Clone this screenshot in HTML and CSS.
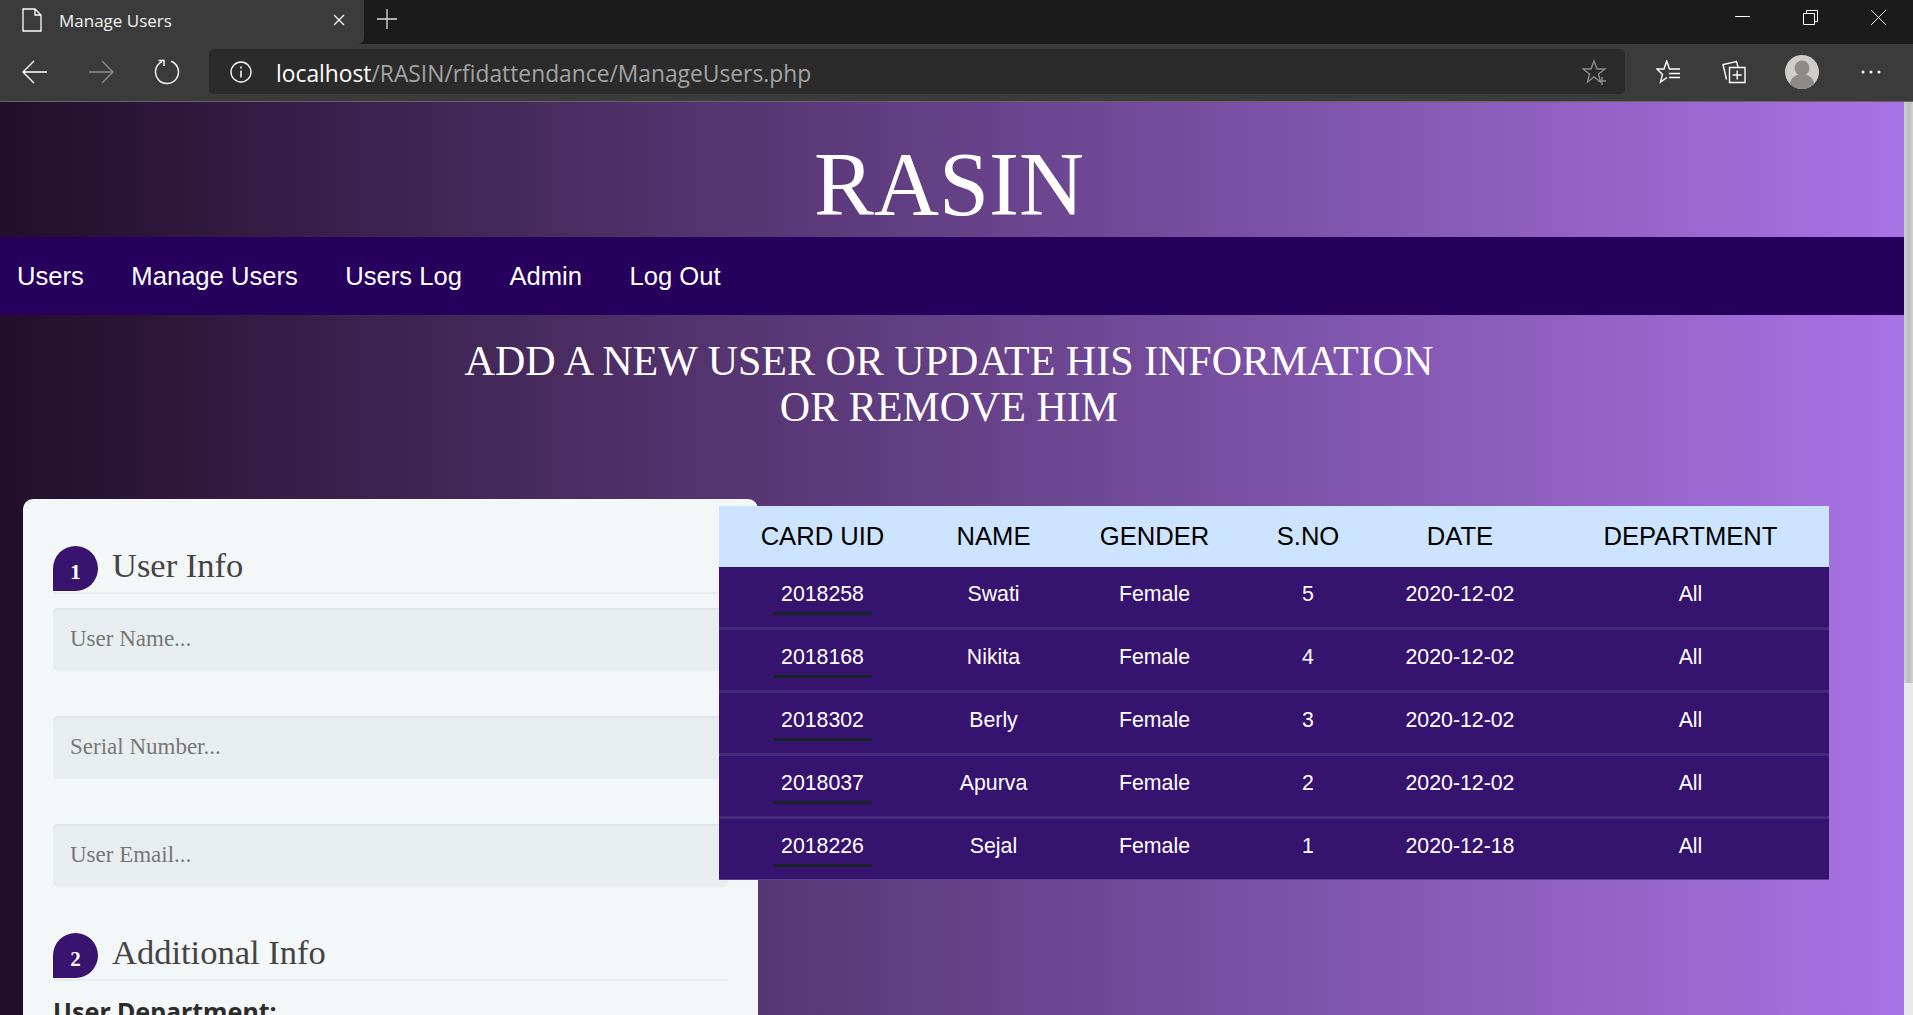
FILE: index.html
```html
<!DOCTYPE html>
<html lang="en">
<head>
<meta charset="utf-8">
<title>Manage Users</title>
<link rel="stylesheet" href="styles.css">
</head>
<body>
<div class="tabstrip">
  <div class="tab">
    <svg class="tab-icon" width="20" height="24" viewBox="0 0 20 24"><path d="M1 1h12l6 6v16H1zM13 1v6h6" fill="none" stroke="#fff" stroke-width="1.3"/></svg>
    <span class="tab-title">Manage Users</span>
    <svg class="tab-close" width="14" height="14" viewBox="0 0 14 14"><path d="M2 2l10 10M12 2L2 12" stroke="#fff" stroke-width="1.3"/></svg>
  </div>
  <svg class="new-tab" width="22" height="22" viewBox="0 0 22 22"><path d="M11 1v20M1 11h20" stroke="#ddd" stroke-width="1.3"/></svg>
  <div class="window-buttons">
    <svg width="15" height="15" viewBox="0 0 15 15"><path d="M0 6.500h15" stroke="#fff" stroke-width="1"/></svg>
    <svg width="15" height="15" viewBox="0 0 15 15"><path d="M.5 3.500h11v11H.5zM3.500 3.500V.5h11v11h-3" fill="none" stroke="#fff" stroke-width="1"/></svg>
    <svg width="15" height="15" viewBox="0 0 15 15"><path d="M0 0l15 15M15 0L0 15" stroke="#fff" stroke-width="1"/></svg>
  </div>
</div>
<div class="toolbar">
  <svg class="nav-btn" width="26" height="24" viewBox="0 0 26 24"><path d="M1 12h24M12 1L1 12l11 11" fill="none" stroke="#fff" stroke-width="1.4"/></svg>
  <svg class="nav-btn" width="26" height="24" viewBox="0 0 26 24"><path d="M1 12h24M14 1l11 11-11 11" fill="none" stroke="#8a8a8a" stroke-width="1.4"/></svg>
  <svg class="nav-btn" width="26" height="26" viewBox="0 0 26 26"><path d="M17 2.220A11.500 11.500 0 1 1 8 2.640M4.500 1.500H10V7" fill="none" stroke="#fff" stroke-width="1.4"/></svg>
  <div class="address">
    <svg class="info" width="22" height="22" viewBox="0 0 22 22"><circle cx="11" cy="11" r="10" fill="none" stroke="#fff" stroke-width="1.3"/><path d="M11 9.500v7M11 5.500v2" stroke="#fff" stroke-width="1.500"/></svg>
    <span class="url"><span class="host">localhost</span>/RASIN/rfidattendance/ManageUsers.php</span>
    <svg class="fav-add" width="26" height="26" viewBox="0 0 26 26"><path d="M12 2l3 8h8l-6.500 5 2 8L12 18l-6.500 5 2-8L1 10h8z" fill="none" stroke="#8a8a8a" stroke-width="1.400"/><path d="M20 18v8M16 22h8" stroke="#8a8a8a" stroke-width="1.400"/></svg>
  </div>
  <div class="tools">
    <svg width="24" height="24" viewBox="0 0 24 24"><path d="M24 9H13.500L10.700 1 8 9H1l5.500 5.500L4.500 22 11 17.500M13 13.500h11M13 17.500h11" fill="none" stroke="#fff" stroke-width="1.400"/></svg>
    <svg width="24" height="24" viewBox="0 0 24 24"><path d="M4.500 19.500L1 4.500l13.500-3L16 7" fill="none" stroke="#fff" stroke-width="1.400"/><path d="M7.500 7.500H23v15H7.500zM15.200 10.500v9M10.700 15h9" fill="none" stroke="#fff" stroke-width="1.400"/></svg>
    <svg width="34" height="34" viewBox="0 0 34 34"><circle cx="17" cy="17" r="17" fill="#cfcdca"/><circle cx="17" cy="13" r="7.500" fill="#8d8a87"/><path d="M5 29a12 10 0 0 1 24 0a17 17 0 0 1-24 0z" fill="#8d8a87"/></svg>
    <svg width="20" height="4" viewBox="0 0 20 4"><circle cx="2" cy="2" r="1.500" fill="#fff"/><circle cx="10" cy="2" r="1.500" fill="#fff"/><circle cx="18" cy="2" r="1.500" fill="#fff"/></svg>
  </div>
</div>
<div class="viewport">
  <div class="page">
    <h1 class="brand">RASIN</h1>
    <nav class="topnav">
      <a>Users</a><a>Manage Users</a><a>Users Log</a><a>Admin</a><a>Log Out</a>
    </nav>
    <h2 class="slogan">ADD A NEW USER OR UPDATE HIS INFORMATION<br>OR REMOVE HIM</h2>
    <div class="content">
      <form class="card">
        <div class="legend"><span class="badge">1</span><span class="legend-text">User Info</span></div>
        <input class="field" placeholder="User Name...">
        <input class="field" placeholder="Serial Number...">
        <input class="field" placeholder="User Email...">
        <div class="legend second"><span class="badge">2</span><span class="legend-text">Additional Info</span></div>
        <label class="dept">User Department:</label>
      </form>
      <table class="users">
        <thead>
          <tr><th class="c1">CARD UID</th><th class="c2">NAME</th><th class="c3">GENDER</th><th class="c4">S.NO</th><th class="c5">DATE</th><th class="c6">DEPARTMENT</th></tr>
        </thead>
        <tbody>
          <tr><td><span class="uid">2018258</span></td><td>Swati</td><td>Female</td><td>5</td><td>2020-12-02</td><td>All</td></tr>
          <tr><td><span class="uid">2018168</span></td><td>Nikita</td><td>Female</td><td>4</td><td>2020-12-02</td><td>All</td></tr>
          <tr><td><span class="uid">2018302</span></td><td>Berly</td><td>Female</td><td>3</td><td>2020-12-02</td><td>All</td></tr>
          <tr><td><span class="uid">2018037</span></td><td>Apurva</td><td>Female</td><td>2</td><td>2020-12-02</td><td>All</td></tr>
          <tr><td><span class="uid">2018226</span></td><td>Sejal</td><td>Female</td><td>1</td><td>2020-12-18</td><td>All</td></tr>
        </tbody>
      </table>
    </div>
  </div>
  <div class="scrollbar"><div class="thumb"></div></div>
</div>
</body>
</html>
```
FILE: styles.css
```css
* { box-sizing: border-box; }
html, body { margin: 0; height: 1015px; overflow: hidden; }
body { display: flex; flex-direction: column; background: #1b1b1b; font-family: "Liberation Sans", Arial, sans-serif; }

.tabstrip { height: 44px; flex: none; display: flex; align-items: center; background: #1b1b1b; }
.tab { width: 364px; height: 44px; padding: 0 18px 4px 22px; display: flex; align-items: center; background: #3b3b3b; border-radius: 0 0 6px 0; }
.tab-icon { flex: none; }
.tab-title { margin-left: 17px; flex: 1; color: #f2f2f2; font: 17px "Open Sans", sans-serif; }
.tab-close { flex: none; }
.new-tab { margin-left: 12px; margin-top: -7px; flex: none; }
.window-buttons { margin-left: auto; padding-right: 27px; display: flex; gap: 53px; margin-top: -9px; }

.toolbar { height: 58px; flex: none; display: flex; align-items: center; padding: 0 0 2px 22px; background: #3b3b3b; border-bottom: 1px solid #666; }
.nav-btn { flex: none; margin-right: 40px; }
.nav-btn:nth-of-type(3) { margin-right: 29px; }
.address { width: 1416px; height: 45px; flex: none; display: flex; align-items: center; padding: 0 17px 0 21px; background: #2b2b2b; border-radius: 5px; }
.info { flex: none; }
.url { margin-left: 24px; padding-top: 3px; flex: 1; color: #a3a3a3; font: 22.800px "Open Sans", sans-serif; white-space: nowrap; }
.host { color: #fff; }
.tools { flex: 1; display: flex; align-items: center; padding-left: 31px; }
.tools svg:nth-child(1) { margin-right: 42px; }
.tools svg:nth-child(2) { margin-right: 39px; }
.tools svg:nth-child(3) { margin-right: 42px; }

.viewport { flex: 1; display: flex; min-height: 0; }
.page { flex: 1; min-width: 0; overflow: hidden; background: linear-gradient(to right, #220e2a, #a873e4); }
.scrollbar { width: 9px; flex: none; background: #e9e9e9; }
.thumb { height: 581px; background: linear-gradient(to right, #d2d2d2, #bdbdbd 50%, #d2d2d2); }

.brand { margin: 0; height: 135px; padding: 31px 6px 0 0; color: #fff; text-align: center; font: 400 90px/1.150 "Liberation Serif", serif; }
.topnav { height: 78px; display: flex; align-items: center; padding-left: 17px; gap: 47.500px; background: #26005c; }
.topnav a { color: #fff; font-size: 25.600px; }
.slogan { margin: 23px 0 0; padding-right: 6px; color: #fff; text-align: center; font: 400 42px/46px "Liberation Serif", serif; }
.content { display: flex; align-items: flex-start; margin-top: 69px; padding-left: 23px; }

.card { width: 735px; height: 540px; flex: none; padding: 48px 30px 0; background: #f4f7f8; border-radius: 10px 10px 0 0; }
.legend { height: 47px; display: flex; align-items: flex-end; border-bottom: 2px solid #e8eeef; }
.legend.second { margin-top: 47px; }
.badge { width: 45px; height: 45px; flex: none; margin-bottom: 1px; display: flex; align-items: center; justify-content: center; padding-top: 7px; background: #38146f; border-radius: 100% 100% 100% 0; color: #fff; font: 700 21px "Liberation Serif", serif; }
.legend-text { margin: 0 0 7px 14px; color: #444; font: 34.500px "Liberation Serif", serif; }
.field { display: block; width: 100%; height: 63px; margin-top: 14px; padding: 0 17px 1px; border: 0; border-radius: 5px; background: #e8eeef; box-shadow: inset 0 2px 0 #e0e6e7; font: 23px "Liberation Serif", serif; }
.field + .field { margin-top: 45px; }
.field::placeholder { color: #777; opacity: 1; }
.dept { display: block; margin-top: 13px; color: #2c2c2c; font: 700 25px "Noto Sans", sans-serif; }

.users { width: 1110px; flex: none; margin: 7px 0 0 -39px; border-collapse: separate; border-spacing: 0; position: relative; table-layout: fixed; }
.users th { height: 61px; padding: 0 0 1px; background: #cce4ff; color: #000; font-weight: 400; font-size: 25.600px; }
.users td { height: 63px; padding: 0 0 5px; background: #36136e; color: #fff; font-size: 21.300px; text-align: center; border-bottom: 3px solid #452a78; }
.users tr:last-child td { border-bottom-color: #5f3d92; border-bottom-width: 1px; height: 61px; padding-bottom: 5px; }
.c1 { width: 207px; }
.c2 { width: 135px; }
.c3 { width: 187px; }
.c4 { width: 120px; }
.c5 { width: 184px; }
.c6 { width: 277px; }
.uid { display: inline-block; width: 99px; padding-bottom: 5px; border-bottom: 3px solid #17252a; margin-top: 8px; }
```
